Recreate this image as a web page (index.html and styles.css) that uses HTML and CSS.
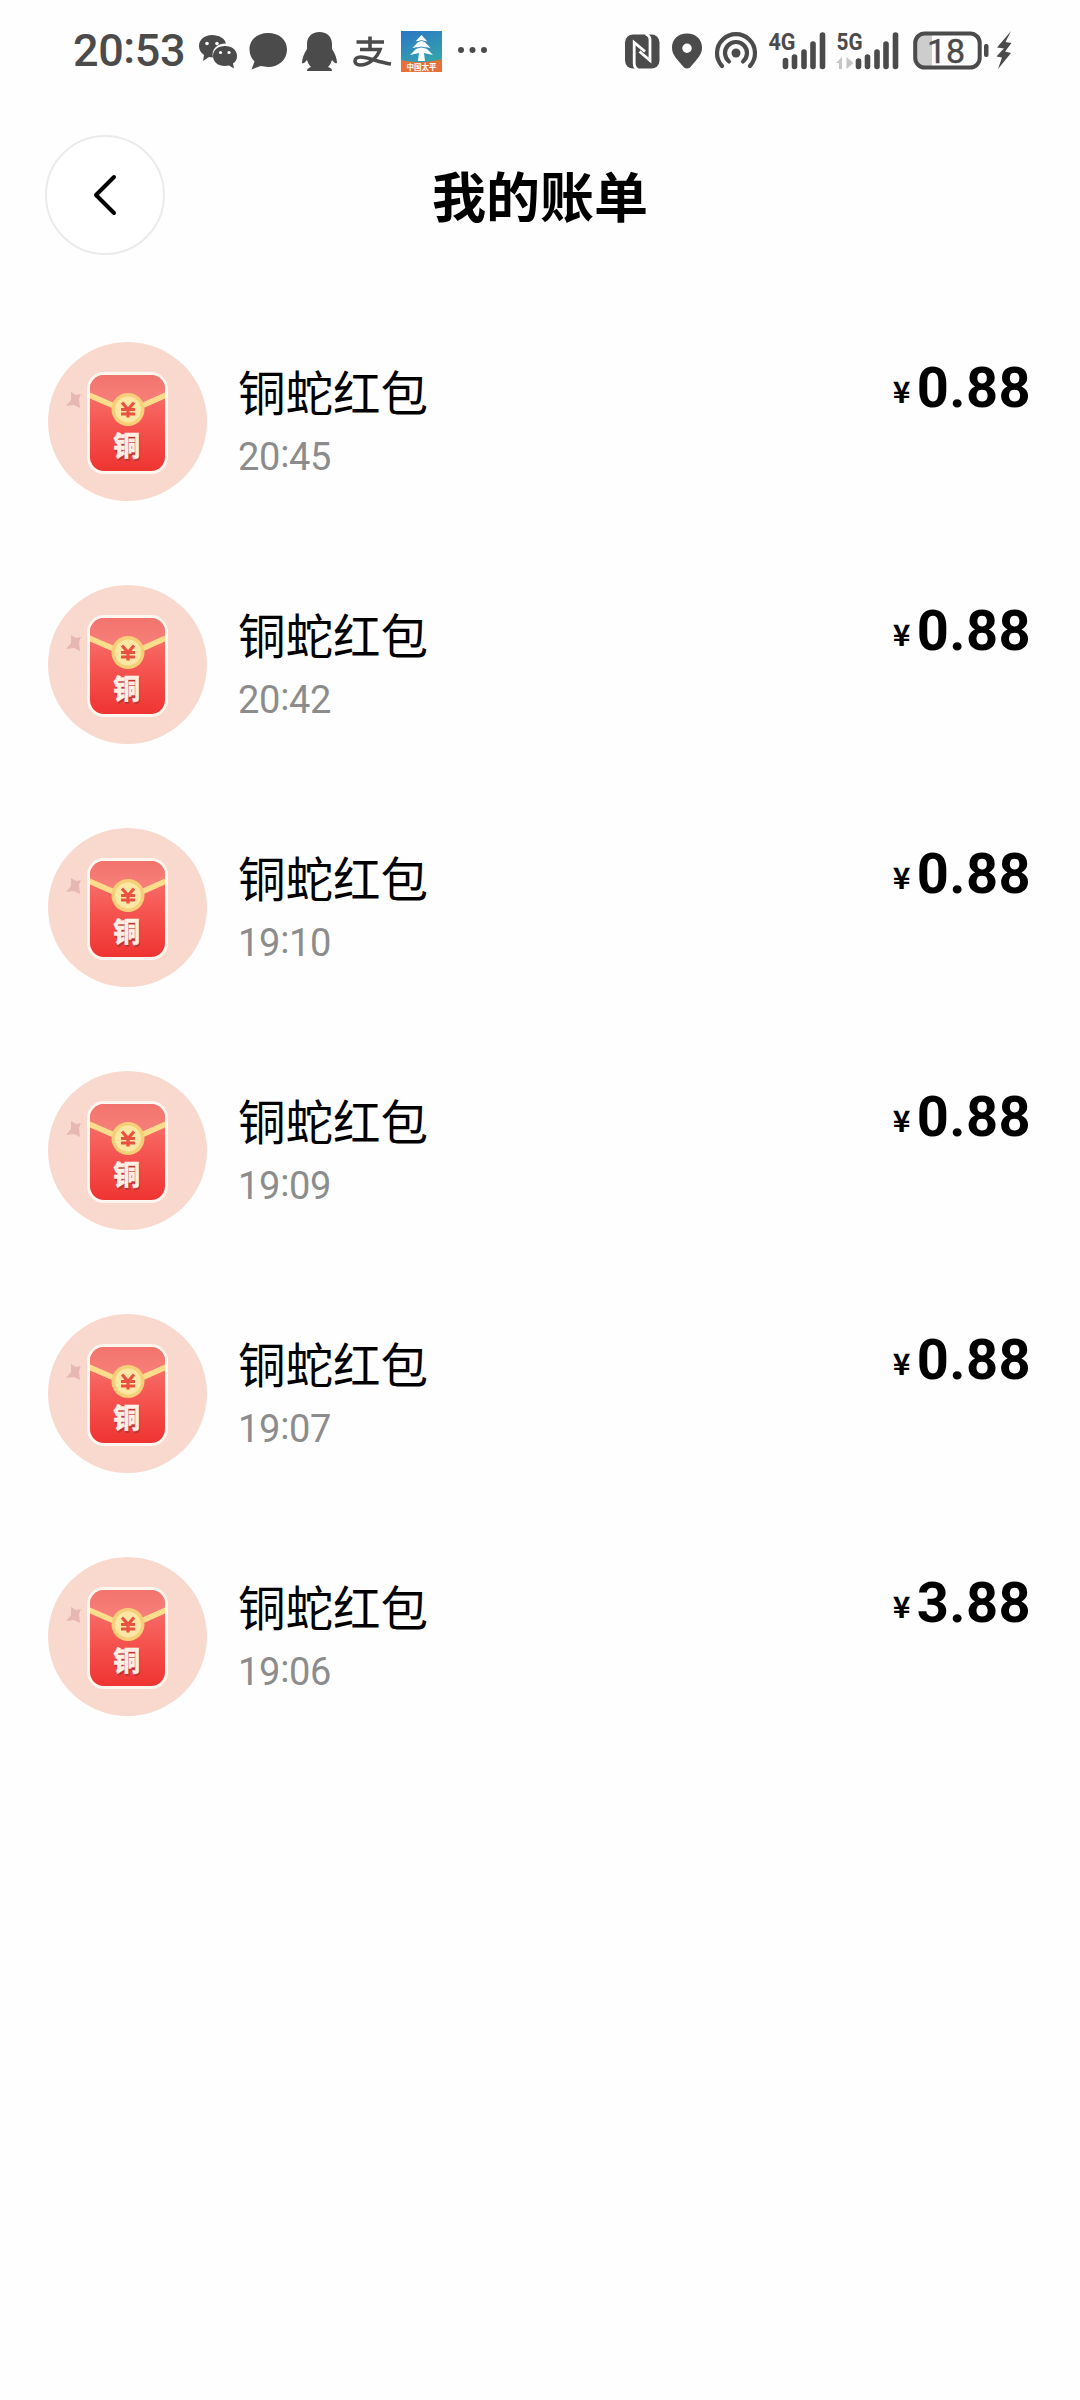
FILE: index.html
```
<!DOCTYPE html>
<html lang="zh-CN">
<head>
<meta charset="utf-8">
<title>我的账单</title>
<link rel="stylesheet" href="styles.css">
</head>
<body>
<svg class="defs" aria-hidden="true">
  <defs>
    <linearGradient id="red" x1="0" y1="0" x2="0" y2="1"><stop offset="0" stop-color="#f68078"/><stop offset=".45" stop-color="#f65a56"/><stop offset="1" stop-color="#ef3431"/></linearGradient>
    <linearGradient id="flap" x1="0" y1="0" x2="0" y2="1"><stop offset="0" stop-color="#f2736d"/><stop offset="1" stop-color="#f9857e"/></linearGradient>
    <linearGradient id="app" x1="0" y1="0" x2=".4" y2="1"><stop offset="0" stop-color="#2b76c4"/><stop offset="1" stop-color="#35a9aa"/></linearGradient>
    <clipPath id="body"><rect x="50" y="45" width="75" height="96" rx="14"/></clipPath>
    <symbol id="packet" viewBox="0 0 180 180">
      <circle cx="87.500" cy="91.500" r="79.500" fill="#f9d9cd"/>
      <path d="M31 62l5 3 5-1-2 5 1 9-6-3-8 1 5-6z" fill="#e6b8b0"/>
      <rect x="47" y="42" width="81" height="102" rx="17" fill="#fff6ef"/>
      <g clip-path="url(#body)">
        <rect x="50" y="45" width="75" height="96" fill="url(#red)"/>
        <path d="M50 45h75v21l-37 17-38-17z" fill="url(#flap)"/>
        <path d="M49 65l39 17 38-17" fill="none" stroke="#fbdd8b" stroke-width="5.500"/>
      </g>
      <circle cx="88" cy="79.500" r="16.500" fill="#f7cf76"/>
      <circle cx="88" cy="79.500" r="13" fill="#fde7a5"/>
      <path d="M82 72.500l6 7 6-7M81 79.500h14M81 84h14M88 79v8.500" fill="none" stroke="#ea5140" stroke-width="3.200"/>
      <text class="seal-shadow" x="87.500" y="127.500">铜</text>
      <text class="seal" x="86.800" y="126">铜</text>
    </symbol>
  </defs>
</svg>
<header class="status">
  <div class="clock">20<span class="colon">:</span>53</div>
  <svg class="wechat" width="40" height="44" viewBox="198 30 40 44"><path d="M212 35c-8 0-13 5-13 11 0 4 2 7 5 9l-1 6 6-4 4 .5c-2-8 4-14 13-14-1-5-7-8.500-14-8.500z"/><path d="M225 46c-7 0-12 4-12 10s5 10 12 10l4-.5 5 3-1-5c3-2 4-4 4-7.500 0-6-5-10-12-10z"/><g fill="#fff"><circle cx="207" cy="43.500" r="1.800"/><circle cx="217" cy="43.500" r="1.800"/><circle cx="220.500" cy="52.500" r="1.600"/><circle cx="229" cy="52.500" r="1.600"/></g></svg>
  <svg class="bubble" width="38" height="44" viewBox="249 30 38 44"><path d="M268 33c-11 0-18.500 7-18.500 16.500 0 5 2 9 5 12l-3 8 9-3.500 7.500 1c11 0 19-7.500 19-17.500S279 33 268 33z"/></svg>
  <svg class="qq" width="36" height="44" viewBox="302 30 36 44"><path d="M319.500 32c-8 0-12.500 5-12.500 12v5c-3 5-5 9-5 14 2 1 3-1 5-3 1 3 2 5 4 7-3 1-4 2-4 4h25c0-2-1-3-4-4 2-2 3-4 4-7 2 2 3 4 5 3 0-5-2-9-5-14v-5c0-7-4.500-12-12.500-12z"/></svg>
  <svg class="alipay" width="38" height="44" viewBox="353 30 38 44"><path d="M356.500 42H384M370 36.500V49M360 49.500H380C377 58 369 65 360 65c-7 0-6.500-8 .5-8 8 0 17 5 30.500 7" fill="none" stroke="#4b4b4b" stroke-width="3.600"/></svg>
  <svg class="appicon" width="42" height="44" viewBox="401 30 42 44"><path fill="url(#app)" d="M401 31h41v41h-41z"/><path d="M401 60c13 3 28 3 41-1v13h-41z" fill="#e86f38"/><path d="M421.500 35l6 6.500-3.500-.5 6.500 7-5.500-1 8 8-9-2 1 8h-7l1-8-9 2 8-8-5.500 1 6.500-7-3.500.5z" fill="#fff"/><path d="M415 42.500l6.500-2 6.500 2M413 49l8.500-2 8.500 2" fill="none" stroke="#3589bd"/><text x="421.500" y="70" class="app-name">中国太平</text></svg>
  <svg class="more" width="31" height="44" viewBox="458 30 31 44"><circle cx="461" cy="50" r="3"/><circle cx="472.500" cy="50" r="3"/><circle cx="484" cy="50" r="3"/></svg>
  <div class="status-right">
    <svg class="nfc" width="35" height="44" viewBox="625 30 35 44"><rect x="625" y="34.500" width="34.500" height="34" rx="8"/><path d="M638 69.500q-3.800-1.500-3.800-6.500V42.500L645 51.500M645.500 34q4.500 1.500 4.500 6V60.500L639.500 51.500" fill="none" stroke="#fff" stroke-width="2.800"/></svg>
    <svg class="pin" width="30" height="44" viewBox="672 30 30 44"><path fill-rule="evenodd" d="M687 33.500c-9 0-15 6-15 14 0 6 3 9 6 13l6 7q3 2 6 0l6-7c3-4 6-7 6-13 0-8-6-14-15-14zm0 10a4.500 4.500 0 1 1 0 9.500 4.500 4.500 0 0 1 0-9.500z"/></svg>
    <svg class="hotspot" width="44" height="44" viewBox="714 30 44 44"><circle cx="736" cy="53" r="4.500"/><path d="M729 61.500a11 11 0 1 1 14 0M722 66a19 19 0 1 1 28 0" fill="none" stroke="#4b4b4b" stroke-width="4.200" stroke-linecap="round"/></svg>
    <svg class="signal4" width="58" height="44" viewBox="768 30 58 44"><text class="net" x="768.500" y="50" textLength="27" lengthAdjust="spacingAndGlyphs">4G</text><path d="M785.500 60.500v6M794.500 57v9.500M804 52v14.500M813 44v22.500M822.500 35v31.500" stroke="#4b4b4b" stroke-width="5.600" stroke-linecap="round"/></svg>
    <svg class="signal5" width="64" height="44" viewBox="836 30 64 44"><text class="net" x="836.500" y="50" textLength="26" lengthAdjust="spacingAndGlyphs">5G</text><path d="M836 63l6-6v12h-3v-6zM846.500 69V57l7 6z" fill="#c6c6c6"/><path d="M858.500 61v5.500M867.500 57v9.500M877 52v14.500M886 44v22.500M895.500 35v31.500" stroke="#4b4b4b" stroke-width="5.600" stroke-linecap="round"/></svg>
    <svg class="battery" width="76" height="44" viewBox="913 30 76 44"><path d="M932 34h-8c-6 0-9 4-9 9v15c0 5 3 9 9 9h8z" fill="#cdcdcd"/><rect x="915.200" y="33.500" width="64.500" height="34" rx="9.500" fill="none" stroke="#4b4b4b" stroke-width="4"/><rect x="984" y="44" width="4.500" height="13" rx="2"/><text x="946" y="62.500" class="charge">18</text></svg>
    <svg class="bolt" width="18" height="44" viewBox="996 30 18 44"><path d="M1011 31L997 47.500l7 1-3 3-4.500 5 5.500 1L998 69l13-16-6-1.500 6.500-8.500-6-1z"/></svg>
  </div>
</header>
<nav class="topbar">
  <button class="back" aria-label="返回"><svg width="26" height="44" viewBox="0 0 26 44"><path d="M21 4L3 22l18 18" fill="none" stroke="#000" stroke-width="4" stroke-linecap="round" stroke-linejoin="round"/></svg></button>
  <h1 class="title">我的账单</h1>
</nav>
<main class="bills">
  <article class="bill"><svg class="packet"><use href="#packet"/></svg><div class="info"><div class="name">铜蛇红包</div><div class="time">20<span class="colon">:</span>45</div></div><div class="amount"><span class="yen">¥</span>0.88</div></article>
  <article class="bill"><svg class="packet"><use href="#packet"/></svg><div class="info"><div class="name">铜蛇红包</div><div class="time">20<span class="colon">:</span>42</div></div><div class="amount"><span class="yen">¥</span>0.88</div></article>
  <article class="bill"><svg class="packet"><use href="#packet"/></svg><div class="info"><div class="name">铜蛇红包</div><div class="time">19<span class="colon">:</span>10</div></div><div class="amount"><span class="yen">¥</span>0.88</div></article>
  <article class="bill"><svg class="packet"><use href="#packet"/></svg><div class="info"><div class="name">铜蛇红包</div><div class="time">19<span class="colon">:</span>09</div></div><div class="amount"><span class="yen">¥</span>0.88</div></article>
  <article class="bill"><svg class="packet"><use href="#packet"/></svg><div class="info"><div class="name">铜蛇红包</div><div class="time">19<span class="colon">:</span>07</div></div><div class="amount"><span class="yen">¥</span>0.88</div></article>
  <article class="bill"><svg class="packet"><use href="#packet"/></svg><div class="info"><div class="name">铜蛇红包</div><div class="time">19<span class="colon">:</span>06</div></div><div class="amount"><span class="yen">¥</span>3.88</div></article>
</main>
</body>
</html>
```
FILE: styles.css
```
* { box-sizing: border-box; }
body { margin: 0; width: 1080px; min-height: 2400px; background: #fefefe; color: #000; font-family: "Noto Sans CJK SC", sans-serif; }
.defs { display: block; width: 0; height: 0; }
.status { display: flex; height: 104px; padding: 30px 66px 30px 73px; align-items: center; fill: #4b4b4b; color: #4b4b4b; }
.status svg { display: block; flex: none; overflow: visible; }
.clock { width: 125px; height: 44px; font: 500 45px/42px Roboto, sans-serif; letter-spacing: -.4px; white-space: nowrap; }
.colon { display: inline-block; line-height: 30px; vertical-align: 3px; }
.bubble { margin-left: 11px; }
.qq { margin-left: 15px; }
.alipay { margin-left: 15px; }
.appicon { margin-left: 10px; }
.more { margin-left: 15px; }
.status-right { display: flex; margin-left: auto; }
.pin { margin-left: 12px; }
.hotspot { margin-left: 12px; }
.signal4 { margin-left: 10px; }
.signal5 { margin-left: 10px; }
.battery { margin-left: 13px; }
.bolt { margin-left: 7px; }
.net { font: 700 24px Roboto, sans-serif; }
.charge { font: 400 34px Roboto, sans-serif; text-anchor: middle; stroke: #4b4b4b; stroke-width: .4; }
.app-name { font: 700 7.500px "Noto Sans CJK SC", sans-serif; fill: #fff; text-anchor: middle; }
.topbar { display: grid; grid-template-columns: 120px 1fr 120px; align-items: center; height: 120px; margin-top: 31px; padding: 0 45px; }
.back { display: flex; width: 120px; height: 120px; padding: 0 0 0 46px; align-items: center; border: 2px solid #ebebeb; border-radius: 50%; background: #fff; }
.title { margin: 0; font-size: 54px; line-height: 80px; font-weight: 700; text-align: center; }
.bills { padding: 75px 49px 0 40px; }
.bill { display: flex; height: 243px; align-items: flex-start; }
.packet { width: 180px; height: 180px; flex: none; }
.seal, .seal-shadow { font: 900 27px "Noto Sans CJK SC", sans-serif; text-anchor: middle; fill: #fff0e5; stroke: #fff0e5; stroke-width: .3; }
.seal-shadow { fill: #c23434; stroke: #c23434; }
.info { padding: 29px 0 0 18px; }
.name { font-size: 47.500px; line-height: 64px; }
.time { font: 400 38px/68px Roboto, sans-serif; letter-spacing: -.3px; color: #8c8c8c; }
.amount { display: flex; margin-left: auto; padding-top: 23px; font: 700 56px/70px Roboto, sans-serif; align-items: flex-start; letter-spacing: .4px; }
.yen { margin-right: 6px; padding-top: 6px; font: 700 30px/62px "Noto Sans CJK SC", sans-serif; }
```
